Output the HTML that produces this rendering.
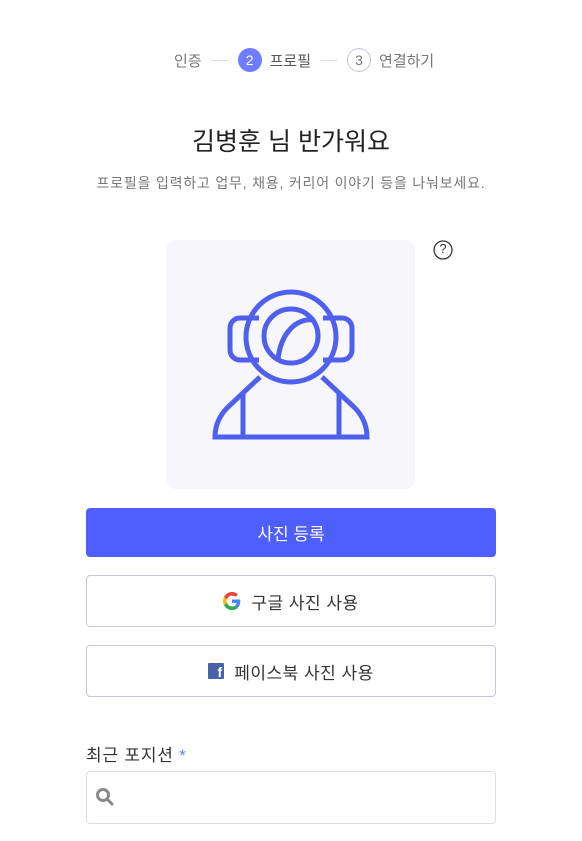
<!DOCTYPE html>
<html><head><meta charset="utf-8"><style>
*{margin:0;padding:0;box-sizing:border-box}
body{width:582px;height:841px;background:#fff;font-family:"Liberation Sans","Noto Sans CJK KR",sans-serif;position:relative;overflow:hidden;color:#333}
.a{position:absolute}
.btn{position:absolute;left:86px;width:410px;border-radius:4px;display:flex;align-items:center;justify-content:center;font-size:17px}
</style></head><body>
<div class="a" style="top:48px;left:174px;font-size:15px;color:#777;display:flex;align-items:center;height:24px">
<span>인증</span><span style="display:inline-block;width:16px;height:1px;background:#ddd;margin:0 10px"></span>
<span style="width:24px;height:24px;border-radius:50%;background:#6e7cff;color:#fff;font-size:14px;display:flex;align-items:center;justify-content:center">2</span>
<span style="margin-left:8px;color:#555">프로필</span><span style="display:inline-block;width:16px;height:1px;background:#ddd;margin:0 10px"></span>
<span style="width:24px;height:24px;border-radius:50%;border:1px solid #c5c9d6;color:#777;font-size:14px;display:flex;align-items:center;justify-content:center">3</span>
<span style="margin-left:8px">연결하기</span></div>
<div class="a" style="top:122px;left:0;width:582px;text-align:center;font-size:25px;color:#222">김병훈 님 반가워요</div>
<div class="a" style="top:173px;left:0;width:582px;text-align:center;font-size:14px;letter-spacing:0.8px;color:#777">프로필을 입력하고 업무, 채용, 커리어 이야기 등을 나눠보세요.</div>
<div class="a" style="left:166px;top:240px;width:249px;height:249px;background:#f7f7fb;border-radius:10px"></div>
<svg class="a" style="left:0;top:0" width="582" height="841" fill="none" stroke="#4f5fee" stroke-width="5">
<circle cx="291" cy="337" r="45"/>
<circle cx="291" cy="336" r="27"/>
<path d="M278 359 C281 333 296 318 314 320"/>
<path d="M259 318 h-19 a10 10 0 0 0 -10 10 v22 a10 10 0 0 0 10 10 h19"/>
<path d="M323 318 h19 a10 10 0 0 1 10 10 v22 a10 10 0 0 1 -10 10 h-19"/>
<path d="M260 377 L228 407 Q215 420 215 437 H367 Q367 420 354 407 L322 377"/>
<path d="M243 393 V437 M339 393 V437"/>
<circle cx="443" cy="250" r="9" stroke="#333" stroke-width="1.3"/>
</svg>
<div class="a" style="left:437px;top:241px;width:12px;text-align:center;font-size:13px;color:#333">?</div>
<div class="btn" style="top:508px;height:49px;background:#4f5fff;color:#fff">사진 등록</div>
<div class="btn" style="top:575px;height:52px;border:1px solid #c3c9d8;color:#333">
<svg width="18" height="18" viewBox="0 0 48 48" style="margin-right:10px"><path fill="#EA4335" d="M24 9.5c3.5 0 6.6 1.2 9.1 3.6l6.8-6.8C35.8 2.4 30.3 0 24 0 14.6 0 6.6 5.4 2.7 13.3l7.9 6.1C12.5 13.7 17.8 9.5 24 9.5z"/><path fill="#4285F4" d="M46.1 24.5c0-1.6-.1-3.1-.4-4.5H24v9h12.4c-.5 2.900-2.2 5.3-4.6 7l7.5 5.8c4.4-4 6.8-10 6.8-17.3z"/><path fill="#FBBC05" d="M10.5 28.6c-.5-1.4-.8-3-.8-4.6s.3-3.2.8-4.6l-7.9-6.1C1 16.6 0 20.2 0 24s.9 7.4 2.6 10.7l7.9-6.1z"/><path fill="#34A853" d="M24 48c6.5 0 11.900-2.1 15.9-5.8l-7.5-5.8c-2.1 1.4-4.8 2.300-8.4 2.300-6.2 0-11.5-4.2-13.4-9.9l-7.9 6.1C6.6 42.6 14.6 48 24 48z"/></svg><span style="letter-spacing:0.5px">구글 사진 사용</span></div>
<div class="btn" style="top:645px;height:52px;border:1px solid #c3c9d8;color:#333">
<span style="width:16px;height:16px;background:#4a62a8;border-radius:1px;color:#fff;font-weight:bold;font-size:14px;display:flex;align-items:flex-end;justify-content:flex-end;padding-right:2px;margin-right:10px;line-height:1">f</span><span style="letter-spacing:0.5px">페이스북 사진 사용</span></div>
<div class="a" style="left:86px;top:741px;font-size:17px;letter-spacing:0.8px;color:#333">최근 포지션 <span style="color:#6e7cff">*</span></div>
<div class="a" style="left:86px;top:771px;width:410px;height:53px;border:1px solid #dcdfe6;border-radius:4px"></div>
<svg class="a" style="left:95px;top:787px" width="20" height="20" fill="none" stroke="#8a8a8a" stroke-width="3"><circle cx="8" cy="8" r="5.5"/><path d="M12 12 L17 17" stroke-linecap="round"/></svg>
</body></html>
